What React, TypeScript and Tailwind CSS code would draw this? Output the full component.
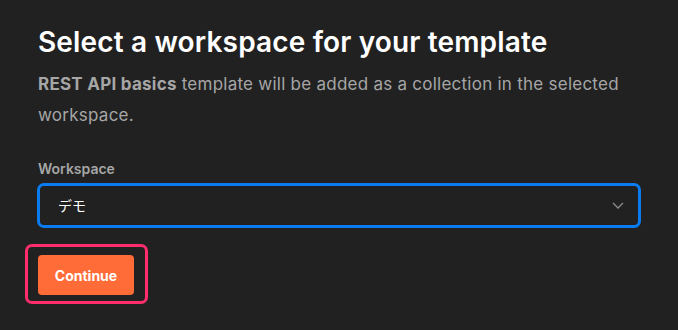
import React from "react";

export default function App() {
  return (
    <div
      className="w-[678px] h-[330px] bg-[#212121] px-[38px] pt-[22px]"
      style={{ fontFamily: "Inter, 'Noto Sans CJK JP', sans-serif" }}
    >
      <h1 className="text-[28px] leading-[40px] font-semibold tracking-[0.15px] text-white">
        Select a workspace for your template
      </h1>
      <p className="mt-[7px] text-[17px] leading-[31px] tracking-[0.25px] text-[#a6a6a6]">
        <span className="font-bold">REST API basics</span> template will be added as a collection in the selected
        workspace.
      </p>
      <div className="mt-[28px] text-[14px] leading-[20px] font-semibold text-[#a6a6a6]">Workspace</div>
      <div className="mt-[4px] -mx-[1px] h-[45px] rounded-[7px] border-[3px] border-[#0a7cf0] flex items-center justify-between pl-[18px] pr-[14px]">
        <span className="text-[14px] text-white">デモ</span>
        <svg width="12" height="7" viewBox="0 0 12 7" fill="none">
          <path d="M1 1l5 5 5-5" stroke="#8c8c8c" strokeWidth="1.3" />
        </svg>
      </div>
      <div className="mt-[16px] -ml-[13px] inline-flex rounded-[7px] border-[3px] border-[#ff2d6c] pl-[10px] pr-[11px] pt-[8px] pb-[6px]">
        <button className="w-[96px] h-[40px] rounded-[4px] bg-[#ff6c37] text-white text-[14px] font-bold">
          Continue
        </button>
      </div>
    </div>
  );
}
